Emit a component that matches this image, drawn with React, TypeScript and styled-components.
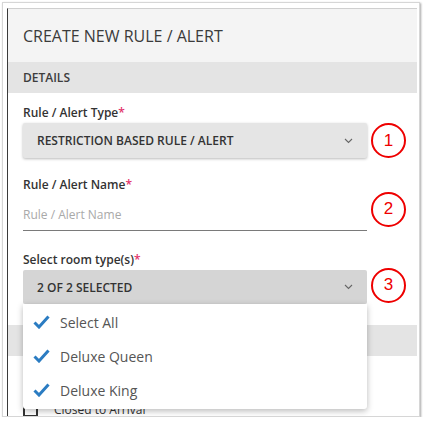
import * as React from 'react'
import styled, { createGlobalStyle } from 'styled-components'

const GlobalStyle = createGlobalStyle`
  html, body {
    margin: 0;
    padding: 0;
    background: #ffffff;
    font-family: 'Open Sans', 'Liberation Sans', sans-serif;
  }
`

const Frame = styled.div`
  box-sizing: border-box;
  margin: 2px 0 0 2px;
  width: 418px;
  height: 415px;
  border: 1px solid #d6d6d6;
  box-shadow: 1px 1px 2px rgba(0, 0, 0, 0.35);
  background: #ffffff;
  padding: 5px 2px 0 4px;
  overflow: hidden;
`

const Panel = styled.div`
  position: relative;
  height: 100%;
  border-left: 1px solid #3a3a3a;
  border-top: 1px solid #cfcfcf;
  background: #ffffff;
`

const Header = styled.div`
  height: 53px;
  background: #f4f4f4;
  display: flex;
  align-items: center;
  padding-left: 15px;
`

const Title = styled.h1`
  margin: 0;
  font-size: 16px;
  font-weight: 400;
  color: #3b3b3b;
`

const SectionBar = styled.div`
  height: 31px;
  background: #e4e4e4;
  display: flex;
  align-items: center;
  padding-left: 15px;
  font-size: 12px;
  font-weight: 600;
  color: #3d3d3d;
`

const Form = styled.div`
  padding: 12px 0 21px 15px;
`

const Field = styled.div<{ $gap: number }>`
  margin-top: ${p => p.$gap}px;
`

const Label = styled.div`
  height: 16px;
  line-height: 16px;
  font-size: 12px;
  font-weight: 600;
  color: #333333;
  margin-bottom: 2px;
`

const Required = styled.span`
  color: #e2336b;
`

const ControlRow = styled.div`
  position: relative;
  display: flex;
  align-items: center;
  gap: 4px;
`

const SelectBox = styled.div<{ $open?: boolean }>`
  box-sizing: border-box;
  width: 344px;
  height: ${p => (p.$open ? 34 : 35)}px;
  border-radius: 2px;
  background: ${p => (p.$open ? '#d5d5d5' : '#e5e5e5')};
  box-shadow: ${p => (p.$open ? 'none' : '0 1px 3px rgba(0, 0, 0, 0.28)')};
  display: flex;
  align-items: center;
  justify-content: space-between;
  padding: 0 14px 0 14px;
  font-size: 12px;
  font-weight: 600;
  color: #333333;
`

const TextInput = styled.input`
  box-sizing: border-box;
  width: 344px;
  height: 36px;
  border: none;
  border-bottom: 1px solid #7a7a7a;
  background: transparent;
  padding: 4px 0 0 0;
  font-family: 'Open Sans', 'Liberation Sans', sans-serif;
  font-size: 12px;
  color: #333333;
  outline: none;

  &::placeholder {
    color: #a9a9a9;
  }
`

const Marker = styled.div<{ $lift: number }>`
  box-sizing: border-box;
  flex: none;
  width: 35px;
  height: 35px;
  border: 2px solid #ee0000;
  border-radius: 50%;
  display: flex;
  align-items: center;
  justify-content: center;
  font-family: 'Liberation Sans', Arial, sans-serif;
  font-size: 17px;
  color: #ee0000;
  margin-top: -${p => p.$lift}px;
`

const Menu = styled.ul`
  position: absolute;
  top: 34px;
  left: 0;
  width: 344px;
  margin: 0;
  padding: 1px 0 2px;
  list-style: none;
  background: #ffffff;
  border-radius: 0 0 3px 3px;
  box-shadow: 0 2px 6px rgba(0, 0, 0, 0.28);
  z-index: 2;
`

const MenuItem = styled.li`
  height: 34px;
  display: flex;
  align-items: center;
  padding-left: 10px;
  gap: 10px;
  font-size: 14px;
  color: #555555;
`

const CheckRow = styled.div`
  display: flex;
  align-items: center;
  gap: 16px;
  padding: 45px 0 0 15px;
  font-size: 12px;
  color: #333333;
`

const CheckSquare = styled.span`
  box-sizing: border-box;
  width: 15px;
  height: 15px;
  border: 2px solid #333333;
  border-radius: 1px;
`

const Chevron = () => (
  <svg width="9" height="6" viewBox="0 0 9 6">
    <polyline points="1,1 4.5,4.5 8,1" fill="none" stroke="#666" strokeWidth="1.1" />
  </svg>
)

const Tick = () => (
  <svg width="17" height="14" viewBox="0 0 17 14">
    <polyline
      points="1.5,7.5 6,12 15.5,1.5"
      fill="none"
      stroke="#2b7cc2"
      strokeWidth="3"
      strokeLinejoin="miter"
    />
  </svg>
)

const rooms = ['Select All', 'Deluxe Queen', 'Deluxe King']

export default function App() {
  return (
    <>
      <GlobalStyle />
      <Frame>
        <Panel>
          <Header>
            <Title>CREATE NEW RULE / ALERT</Title>
          </Header>
          <SectionBar>DETAILS</SectionBar>
          <Form>
            <Field $gap={0}>
              <Label>
                Rule / Alert Type<Required>*</Required>
              </Label>
              <ControlRow>
                <SelectBox>
                  <span>RESTRICTION BASED RULE / ALERT</span>
                  <Chevron />
                </SelectBox>
                <Marker $lift={0}>1</Marker>
              </ControlRow>
            </Field>
            <Field $gap={19}>
              <Label>
                Rule / Alert Name<Required>*</Required>
              </Label>
              <ControlRow>
                <TextInput placeholder="Rule / Alert Name" />
                <Marker $lift={8}>2</Marker>
              </ControlRow>
            </Field>
            <Field $gap={21}>
              <Label>
                Select room type(s)<Required>*</Required>
              </Label>
              <ControlRow>
                <SelectBox $open>
                  <span>2 OF 2 SELECTED</span>
                  <Chevron />
                </SelectBox>
                <Marker $lift={4}>3</Marker>
                <Menu>
                  {rooms.map(r => (
                    <MenuItem key={r}>
                      <Tick />
                      {r}
                    </MenuItem>
                  ))}
                </Menu>
              </ControlRow>
            </Field>
          </Form>
          <SectionBar />
          <CheckRow>
            <CheckSquare />
            Closed to Arrival
          </CheckRow>
        </Panel>
      </Frame>
    </>
  )
}
